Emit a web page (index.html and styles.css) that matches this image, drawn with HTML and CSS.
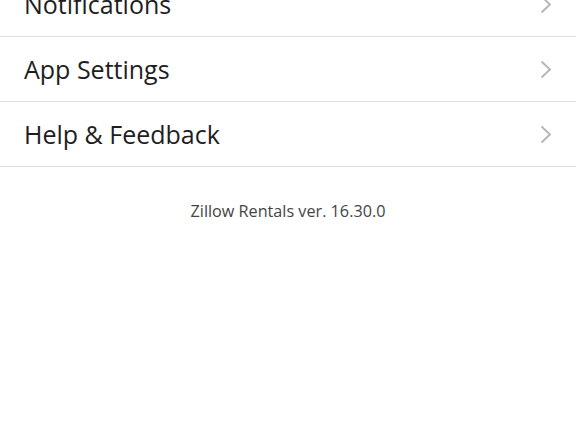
FILE: index.html
```html
<!DOCTYPE html>
<html>
<head>
<meta charset="utf-8">
<link rel="stylesheet" href="styles.css">
</head>
<body>
<div class="page">
  <ul class="menu">
    <li class="row"><span class="label">Notifications</span><svg class="chev" viewBox="0 0 12 19" width="12" height="19"><path d="M1.5 1.5l8.5 8-8.5 8" fill="none" stroke="#b4b4b4" stroke-width="1.8"/></svg></li>
    <li class="row"><span class="label">App Settings</span><svg class="chev" viewBox="0 0 12 19" width="12" height="19"><path d="M1.5 1.5l8.5 8-8.5 8" fill="none" stroke="#b4b4b4" stroke-width="1.8"/></svg></li>
    <li class="row"><span class="label">Help &amp; Feedback</span><svg class="chev" viewBox="0 0 12 19" width="12" height="19"><path d="M1.5 1.5l8.5 8-8.5 8" fill="none" stroke="#b4b4b4" stroke-width="1.8"/></svg></li>
  </ul>
  <p class="version">Zillow Rentals ver. 16.30.0</p>
</div>
</body>
</html>
```
FILE: styles.css
```css
* { box-sizing: border-box; }
html, body { margin: 0; padding: 0; background: #fff; }
body { font-family: "Open Sans", sans-serif; color: #222; overflow: hidden; }
.page { width: 576px; height: 432px; }
.menu { list-style: none; margin: -28px 0 0; padding: 0; }
.row {
  height: 65px;
  display: flex;
  align-items: center;
  justify-content: space-between;
  padding: 0 24px 0 24px;
  border-bottom: 1px solid #dedede;
}
.label { font-size: 25px; color: #1e1e1e; }
.version {
  margin: 33px 0 0;
  text-align: center;
  font-size: 16.2px;
  color: #444;
}
```
